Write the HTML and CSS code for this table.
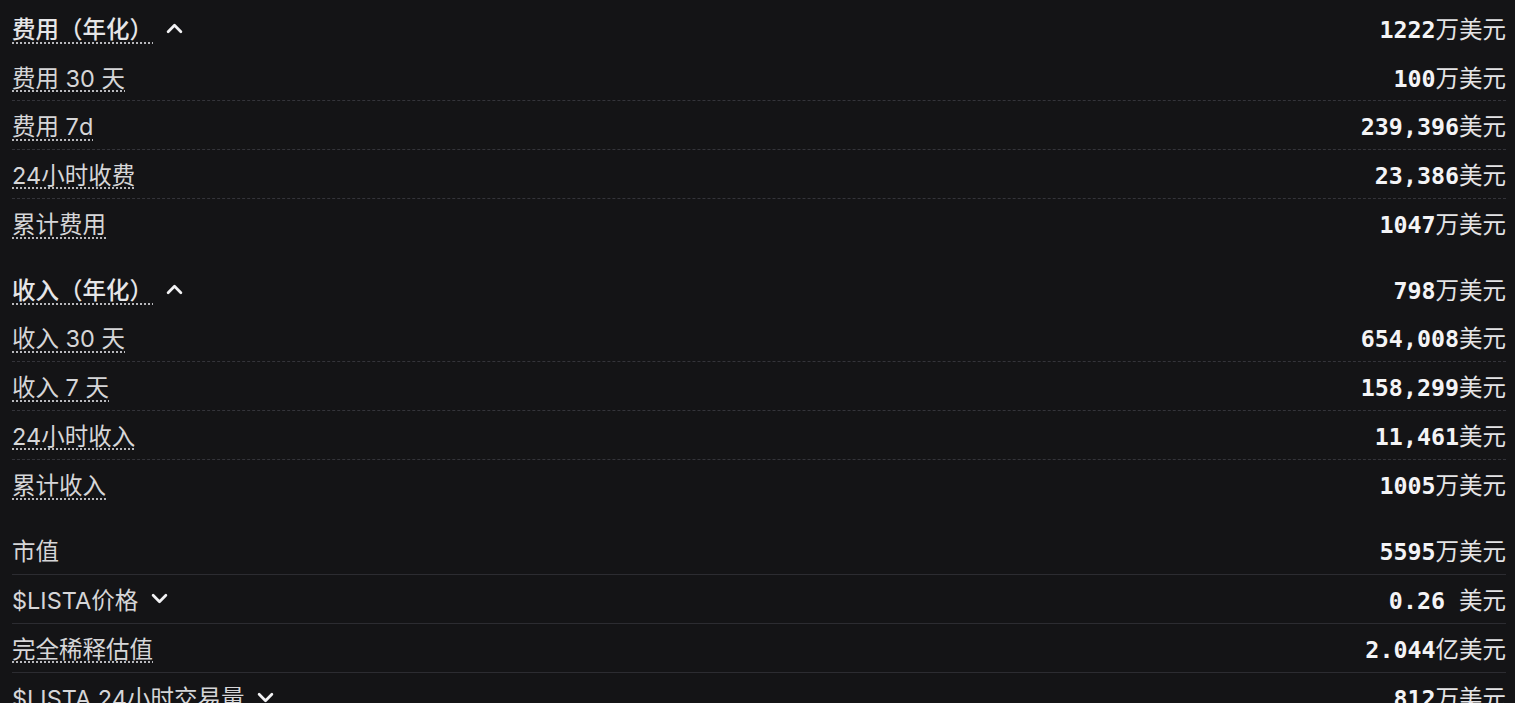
FILE: index.html
```html
<!DOCTYPE html>
<html lang="zh">
<head>
<meta charset="utf-8">
<link rel="stylesheet" href="styles.css">
</head>
<body>
<div class="panel">
  <section class="group dashed">
    <div class="row head">
      <span class="label"><span class="tip">费用（年化）</span><svg class="chev" viewBox="0 0 16 10"><path d="M2 8 L8 2 L14 8"/></svg></span>
      <span class="val"><b>1222</b>万美元</span>
    </div>
    <div class="row"><span class="label"><span class="tip">费用 30 天</span></span><span class="val"><b>100</b>万美元</span></div>
    <div class="row"><span class="label"><span class="tip">费用 7d</span></span><span class="val"><b>239,396</b>美元</span></div>
    <div class="row"><span class="label"><span class="tip">24小时收费</span></span><span class="val"><b>23,386</b>美元</span></div>
    <div class="row"><span class="label"><span class="tip">累计费用</span></span><span class="val"><b>1047</b>万美元</span></div>
  </section>
  <section class="group dashed">
    <div class="row head">
      <span class="label"><span class="tip">收入（年化）</span><svg class="chev" viewBox="0 0 16 10"><path d="M2 8 L8 2 L14 8"/></svg></span>
      <span class="val"><b>798</b>万美元</span>
    </div>
    <div class="row"><span class="label"><span class="tip">收入 30 天</span></span><span class="val"><b>654,008</b>美元</span></div>
    <div class="row"><span class="label"><span class="tip">收入 7 天</span></span><span class="val"><b>158,299</b>美元</span></div>
    <div class="row"><span class="label"><span class="tip">24小时收入</span></span><span class="val"><b>11,461</b>美元</span></div>
    <div class="row"><span class="label"><span class="tip">累计收入</span></span><span class="val"><b>1005</b>万美元</span></div>
  </section>
  <section class="group solid">
    <div class="row"><span class="label">市值</span><span class="val"><b>5595</b>万美元</span></div>
    <div class="row"><span class="label">$LISTA价格<svg class="chev" viewBox="0 0 16 10"><path d="M2 2 L8 8 L14 2"/></svg></span><span class="val"><b>0.26 </b>美元</span></div>
    <div class="row"><span class="label"><span class="tip">完全稀释估值</span></span><span class="val"><b>2.044</b>亿美元</span></div>
    <div class="row"><span class="label">$LISTA 24小时交易量<svg class="chev" viewBox="0 0 16 10"><path d="M2 2 L8 8 L14 2"/></svg></span><span class="val"><b>812</b>万美元</span></div>
  </section>
</div>
</body>
</html>
```
FILE: styles.css
```css
html, body {
  margin: 0;
  padding: 0;
  background: #141416;
  height: 703px;
  overflow: hidden;
}
body {
  font-family: "Inter", "Noto Sans CJK SC", sans-serif;
  color: #d6d6d8;
}
.panel {
  padding: 4px 9px 0 12px;
  display: flex;
  flex-direction: column;
  gap: 17.5px;
}
.group {
  display: flex;
  flex-direction: column;
}
.row {
  height: 48.7px;
  display: flex;
  align-items: center;
  justify-content: space-between;
  box-sizing: border-box;
  font-size: 23.5px;
}
.dashed .row:not(.head):not(:last-child) {
  border-bottom: 1px dashed #34343a;
}
.solid .row {
  height: 49px;
}
.solid .row:not(:last-child) {
  border-bottom: 1px solid #2c2c31;
}
.label {
  display: flex;
  align-items: center;
  gap: 13px;
}
.tip {
  text-decoration: underline dotted #b8b8bc;
  text-decoration-thickness: 2px;
  text-underline-offset: 4px;
}
.head .label {
  color: #e6e6e8;
  font-weight: 500;
}
.chev {
  width: 17px;
  height: 11px;
  fill: none;
  stroke: #f2f2f4;
  stroke-width: 2.6;
  stroke-linecap: round;
  stroke-linejoin: round;
}
.val {
  color: #e4e4e6;
  font-size: 23.5px;
}
.val b {
  font-family: "DejaVu Sans Mono", monospace;
  font-weight: bold;
  color: #f4f4f6;
  font-size: 23.3px;
  white-space: pre;
}
```
